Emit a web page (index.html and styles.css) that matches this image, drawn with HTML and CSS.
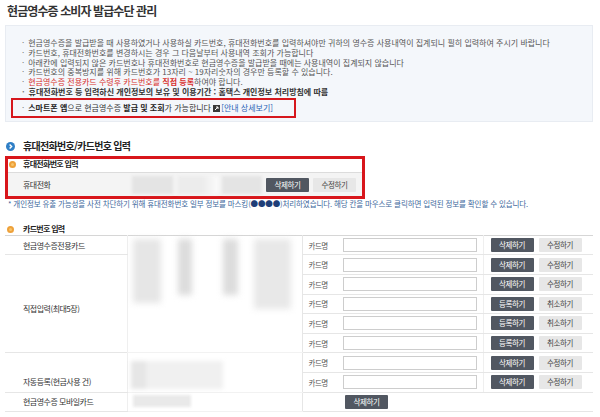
FILE: index.html
```html
<!DOCTYPE html>
<html lang="ko">
<head>
    <meta charset="UTF-8">
    <title>현금영수증 소비자 발급수단 관리</title>
    <link rel="stylesheet" href="styles.css">
</head>
<body>
    <h1 class="page-title">현금영수증 소비자 발급수단 관리</h1>

    <div class="notice">
        <ul>
            <li>현금영수증을 발급받을 때 사용하였거나 사용하실 카드번호, 휴대전화번호를 입력하셔야만 귀하의 영수증 사용내역이 집계되니 필히 입력하여 주시기 바랍니다</li>
            <li>카드번호, 휴대전화번호를 변경하시는 경우 그 다음날부터 사용내역 조회가 가능합니다</li>
            <li>아래칸에 입력되지 않은 카드번호나 휴대전화번호로 현금영수증을 발급받을 때에는 사용내역이 집계되지 않습니다</li>
            <li>카드번호의 중복방지를 위해 카드번호가 13자리 ~ 19자리숫자의 경우만 등록할 수 있습니다.</li>
            <li><span class="red">현금영수증 전용카드 수령후 카드번호를 <b>직접 등록</b></span>하여야 합니다.</li>
            <li class="dark">휴대전화번호 등 입력하신 개인정보의 보유 및 이용기간 : 홈택스 개인정보 처리방침에 따름</li>
            <li class="highlight"><b>스마트폰 앱</b>으로 현금영수증 <b>발급 및 조회</b>가 가능합니다 <svg class="ext" width="7" height="7" viewBox="0 0 7 7"><rect width="7" height="7" fill="#3a3a3a"/><path d="M2 5 L5 2 M3 2 H5 V4" stroke="#fff" stroke-width="1" fill="none"/></svg><a href="#">[안내 상세보기]</a></li>
        </ul>
    </div>

    <h2 class="section-title">
        <svg class="ico-blue" width="9" height="9" viewBox="0 0 9 9"><circle cx="4.5" cy="4.5" r="4.5" fill="#2f7fc6"/><path d="M3.6 2.6 L5.6 4.5 L3.6 6.4" stroke="#fff" stroke-width="1.4" fill="none"/></svg>
        휴대전화번호/카드번호 입력
    </h2>

    <div class="phone-box">
        <h3 class="sub-title"><span class="dot"></span>휴대전화번호 입력</h3>
        <div class="phone-row">
            <span class="row-label">휴대전화</span>
            <div class="phone-mask">
                <span class="pm pm1"></span>
                <span class="pm pm2"></span>
                <span class="pm pm3"></span>
            </div>
            <button class="btn dark" type="button">삭제하기</button>
            <button class="btn light" type="button">수정하기</button>
        </div>
    </div>

    <p class="mask-note">* 개인정보 유출 가능성을 사전 차단하기 위해 휴대전화번호 일부 정보를 마스킹(<span class="dots">●●●●</span>)처리하였습니다. 해당 칸을 마우스로 클릭하면 입력된 정보를 확인할 수 있습니다.</p>

    <h3 class="sub-title card-title"><span class="dot"></span>카드번호 입력</h3>

    <table class="card-table">
        <colgroup>
            <col class="c-label">
            <col class="c-mask">
            <col class="c-name">
            <col class="c-input">
            <col class="c-btns">
        </colgroup>
        <tr>
            <td class="label">현금영수증전용카드</td>
            <td class="mask" rowspan="6">
                <div class="card-mask">
                    <span class="st st1"></span>
                    <span class="st st2"></span>
                    <span class="st st3"></span>
                    <span class="st st4"></span>
                </div>
            </td>
            <td class="name">카드명</td>
            <td class="field"><input type="text"></td>
            <td class="btns"><button class="btn dark" type="button">삭제하기</button><button class="btn light" type="button">수정하기</button></td>
        </tr>
        <tr>
            <td class="label label-direct" rowspan="5">직접입력(최대5장)</td>
            <td class="name">카드명</td>
            <td class="field"><input type="text"></td>
            <td class="btns"><button class="btn dark" type="button">삭제하기</button><button class="btn light" type="button">수정하기</button></td>
        </tr>
        <tr>
            <td class="name">카드명</td>
            <td class="field"><input type="text"></td>
            <td class="btns"><button class="btn dark" type="button">삭제하기</button><button class="btn light" type="button">수정하기</button></td>
        </tr>
        <tr>
            <td class="name">카드명</td>
            <td class="field"><input type="text"></td>
            <td class="btns"><button class="btn dark" type="button">등록하기</button><button class="btn light" type="button">취소하기</button></td>
        </tr>
        <tr>
            <td class="name">카드명</td>
            <td class="field"><input type="text"></td>
            <td class="btns"><button class="btn dark" type="button">등록하기</button><button class="btn light" type="button">취소하기</button></td>
        </tr>
        <tr>
            <td class="name">카드명</td>
            <td class="field"><input type="text"></td>
            <td class="btns"><button class="btn dark" type="button">등록하기</button><button class="btn light" type="button">취소하기</button></td>
        </tr>
        <tr>
            <td class="label label-auto" rowspan="2">자동등록(현금사용 건)</td>
            <td class="mask" rowspan="2">
                <div class="auto-mask"><span></span></div>
            </td>
            <td class="name">카드명</td>
            <td class="field"><input type="text"></td>
            <td class="btns"><button class="btn dark" type="button">삭제하기</button><button class="btn light" type="button">수정하기</button></td>
        </tr>
        <tr>
            <td class="name">카드명</td>
            <td class="field"><input type="text"></td>
            <td class="btns"><button class="btn dark" type="button">삭제하기</button><button class="btn light" type="button">수정하기</button></td>
        </tr>
        <tr class="mobile-row">
            <td class="label">현금영수증 모바일카드</td>
            <td class="mask"><div class="mobile-mask"></div></td>
            <td class="name"></td>
            <td class="field mobile-btn" colspan="2"><button class="btn dark" type="button">삭제하기</button></td>
        </tr>
    </table>
</body>
</html>
```

FILE: styles.css
```css
* {
    box-sizing: border-box;
}

body {
    margin: 0;
    padding: 0 7px 0 5px;
    background: #fff;
    color: #555;
    font-family: "Noto Sans CJK KR", "Noto Sans", sans-serif;
}

.page-title {
    margin: 0;
    padding: 4px 0 0 2px;
    font-size: 12px;
    line-height: 14px;
    letter-spacing: -0.9px;
    font-weight: bold;
    color: #333;
}

/* 안내 박스 */
.notice {
    margin-top: 7px;
    padding: 12px 0 3px 16px;
    background: #f4f7fb;
    border: 1px solid #e8ecf2;
}
.notice ul {
    margin: 0;
    padding: 0;
    list-style: none;
}
.notice li {
    font-size: 8px;
    line-height: 9.8px;
    letter-spacing: 0;
    color: #555;
    white-space: nowrap;
}
.notice li::before {
    content: "·";
    margin-right: 4px;
    color: #777;
}
.notice .red {
    color: #d8302c;
}
.notice .dark {
    color: #333;
    font-weight: bold;
}
.notice .highlight {
    width: 285px;
    margin: 1.5px 0 0 -11px;
    padding-left: 9px;
    line-height: 16px;
    letter-spacing: 0;
    border: 2px solid #d6171d;
    color: #333;
}
.notice .highlight b {
    color: #222;
}
.notice .ext {
    vertical-align: -1px;
    margin-right: 1px;
}
.notice a {
    color: #2a62b5;
    text-decoration: none;
}

/* 섹션 제목 */
.section-title {
    display: flex;
    align-items: center;
    margin: 17px 0 0 1px;
    font-size: 10px;
    line-height: 14px;
    letter-spacing: -0.7px;
    color: #222;
}
.ico-blue {
    margin-right: 8px;
}

.sub-title {
    display: flex;
    align-items: center;
    margin: 0;
    padding-left: 1px;
    font-size: 8px;
    line-height: 8px;
    letter-spacing: -0.7px;
    color: #222;
}
.dot {
    width: 7px;
    height: 7px;
    margin-right: 7px;
    border-radius: 50%;
    background: #f7c46a;
    border: 2px solid #eea13a;
}

/* 휴대전화 입력 */
.phone-box {
    width: 360px;
    margin-top: 3px;
    padding-top: 1px;
    border: 3px solid #d8161b;
}
.phone-row {
    display: flex;
    align-items: center;
    height: 24px;
    margin-top: 4px;
    border-top: 1px solid #dcdcdc;
    background: #f4f4f4;
}
.row-label {
    width: 119px;
    padding-left: 15px;
    font-size: 8px;
    letter-spacing: -0.5px;
    color: #333;
}
.phone-mask {
    display: flex;
    margin-left: 5px;
    filter: blur(1.5px);
}
.pm {
    height: 18px;
    background: #e4e4e4;
}
.pm1 {
    width: 41px;
}
.pm2 {
    width: 40px;
    margin-left: 5px;
    background: linear-gradient(90deg, #ececec 60%, #fafafa);
}
.pm3 {
    width: 40px;
    margin-left: 4px;
}
.phone-row .btn.dark {
    margin-left: 4px;
}
.phone-row .btn.light {
    margin-left: 4px;
}

.btn {
    width: 43px;
    height: 14px;
    padding: 0;
    border: 0;
    border-radius: 1px;
    font-family: inherit;
    font-size: 7.5px;
    line-height: 14px;
    letter-spacing: -0.4px;
}
.btn.dark {
    background: #515761;
    color: #fff;
}
.btn.light {
    background: #e7e7e7;
    color: #444;
}

.mask-note {
    margin: 0;
    padding-left: 3px;
    font-size: 7.5px;
    line-height: 10px;
    letter-spacing: -0.12px;
    color: #40689c;
    white-space: nowrap;
}
.mask-note .dots {
    color: #1f3e78;
}

.card-title {
    margin-top: 16px;
    padding-left: 2px;
}
.card-title .dot {
    margin-right: 9px;
}

/* 카드번호 표 */
.card-table {
    width: 588px;
    margin-top: 1.5px;
    border-collapse: collapse;
    border-top: 1px solid #d6d6d6;
    border-bottom: 1px solid #d6d6d6;
    table-layout: fixed;
}
.c-label { width: 122px; }
.c-mask { width: 175px; }
.c-name { width: 35px; }
.c-input { width: 146px; }
.c-btns { width: 110px; }

.card-table tr {
    height: 19.6px;
}
.card-table td {
    padding: 0;
    border-bottom: 1px solid #e6e6e6;
    vertical-align: middle;
    font-size: 7.5px;
    letter-spacing: -0.5px;
}
.card-table .label {
    padding-left: 18px;
    font-size: 8px;
    color: #333;
    border-right: 1px solid #efefef;
}
.card-table .label-direct {
    padding-top: 10px;
}
.card-table .label-auto {
    padding-top: 18px;
}
.card-table .mask {
    vertical-align: top;
    border-bottom-color: #f2f2f2;
}
.card-table .name {
    padding-left: 6px;
    color: #555;
    border-left: 1px solid #e6e6e6;
}
.card-table .field {
    padding-left: 6px;
}
.card-table input {
    display: block;
    width: 134px;
    height: 14px;
    margin: 0;
    border: 1px solid #cdcdcd;
    background: #fff;
}
.card-table .btns {
    padding-left: 7px;
    border-left: 1px solid #efefef;
}
.card-table .btns .btn + .btn {
    margin-left: 5px;
}
.card-table .mobile-btn {
    padding-left: 8px;
}

.card-mask {
    display: flex;
    align-items: flex-start;
    padding: 3px 0 0 5px;
    filter: blur(3px);
}
.st {
    display: block;
}
.st1 {
    width: 28px;
    height: 64px;
    background: #e6e6e6;
}
.st2 {
    width: 14px;
    height: 56px;
    margin-left: 17px;
    background: #dcdcdc;
}
.st3 {
    width: 15px;
    height: 56px;
    margin-left: 31px;
    background: #dcdcdc;
}
.st4 {
    width: 37px;
    height: 70px;
    margin-left: 16px;
    background: #e8e8e8;
}

.auto-mask {
    width: 92px;
    height: 28px;
    margin: 8px 0 0 3px;
    background: #f0f0f0;
    filter: blur(2px);
}
.auto-mask span {
    display: block;
    width: 15px;
    height: 100%;
    background: #e6e6e6;
}

.mobile-mask {
    width: 58px;
    height: 12px;
    margin: 2px 0 0 5px;
    background: #e9e9e9;
    filter: blur(1.5px);
}
```
